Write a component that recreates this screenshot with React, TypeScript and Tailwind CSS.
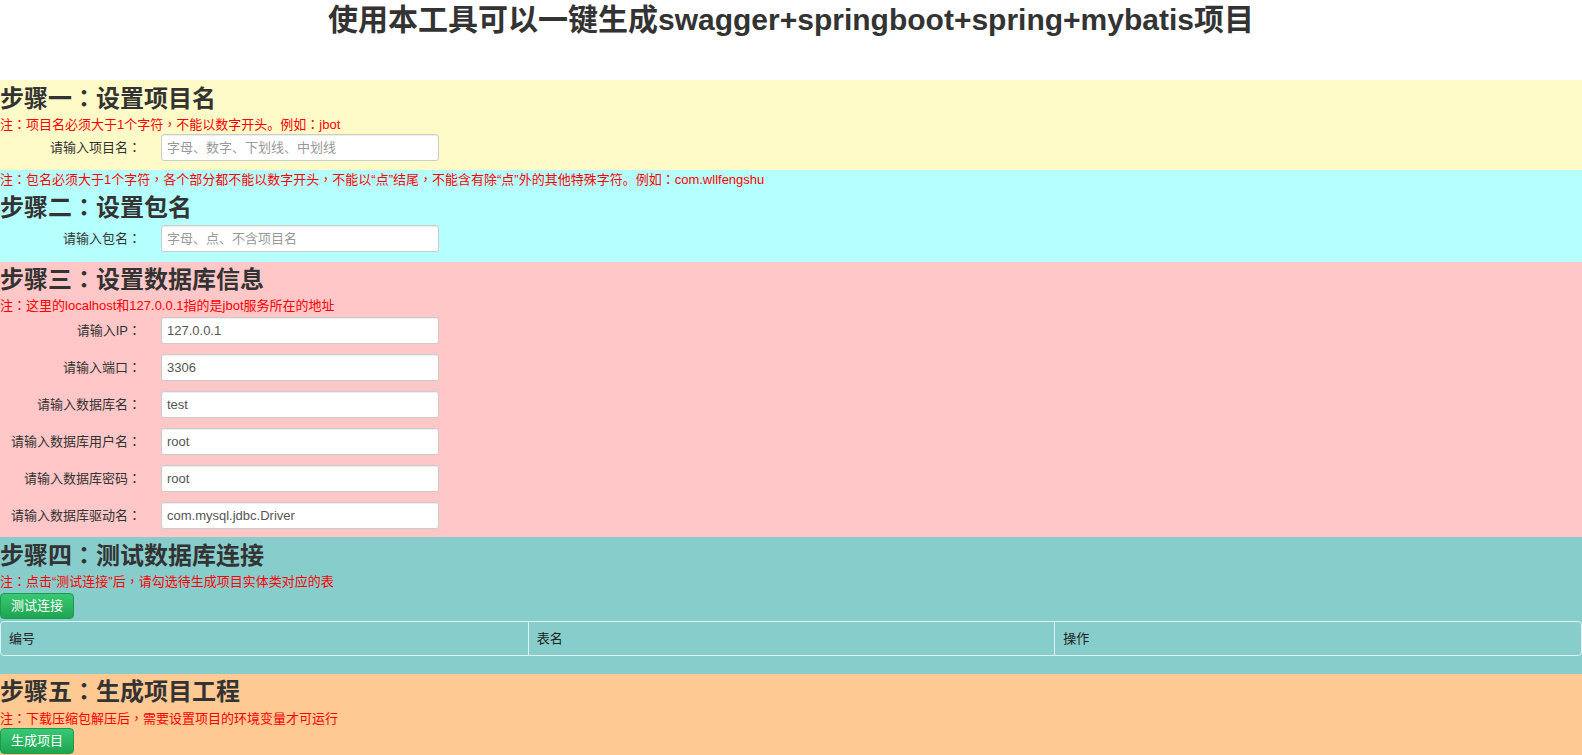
import React from "react";

const FONT = { fontFamily: '"Liberation Sans", "Noto Sans CJK SC", Arial, sans-serif' };
const TC = { fontFamily: '"Noto Sans CJK TC", "Noto Sans CJK SC", sans-serif' };

function P({ text }: { text: string }) {
  const parts = text.split(/([：，])/);
  return (
    <>
      {parts.map((p, i) =>
        p === "：" || p === "，" ? (
          <span key={i} className="leading-[0px]" style={TC}>
            {p}
          </span>
        ) : (
          <React.Fragment key={i}>{p}</React.Fragment>
        )
      )}
    </>
  );
}

function Heading({ text, className = "" }: { text: string; className?: string }) {
  return (
    <div className={`h-[26px] flex items-center ${className}`}>
      <h3 className="text-[24px] leading-[32px] font-bold text-[#333] whitespace-nowrap">
        <P text={text} />
      </h3>
    </div>
  );
}

function Note({ text, className = "" }: { text: string; className?: string }) {
  return (
    <p className={`text-[13px] leading-[18px] h-[18px] text-[#ff0000] whitespace-nowrap ${className}`}>
      <P text={text} />
    </p>
  );
}

function Field({ label, value, placeholder, className = "" }: { label: string; value?: string; placeholder?: string; className?: string }) {
  return (
    <div className={`flex items-center h-[27px] ${className}`}>
      <label className="w-[141px] text-right text-[13px] leading-[18px] text-[#333] whitespace-nowrap">
        <P text={label} />
      </label>
      <input
        className="ml-[20px] w-[278px] h-[27px] border border-[#ccc] rounded-[3px] bg-white pl-[5px] text-[13px] text-[#555] placeholder:text-[#999] shadow-[inset_0_1px_1px_rgba(0,0,0,0.075)] outline-none"
        defaultValue={value}
        placeholder={placeholder}
        style={FONT}
      />
    </div>
  );
}

function GreenButton({ children, className = "" }: { children: React.ReactNode; className?: string }) {
  return (
    <button
      className={`w-[74px] h-[26px] rounded-[4px] border border-[#1b9c4c] bg-gradient-to-b from-[#38c873] to-[#1fa552] text-white text-[13px] leading-[24px] text-center ${className}`}
      style={FONT}
    >
      {children}
    </button>
  );
}

export default function App() {
  return (
    <div className="w-[1582px] min-h-[755px] bg-white" style={FONT}>
      <h1 className="text-center text-[30px] leading-[40px] font-bold text-[#333] mb-[40px]">
        使用本工具可以一键生成swagger+springboot+spring+mybatis项目
      </h1>

      <section className="bg-[#fffbc8] pt-[6px] h-[90px]">
        <Heading text="步骤一：设置项目名" />
        <Note className="mt-[4px]" text="注：项目名必须大于1个字符，不能以数字开头。例如：jbot" />
        <Field className="mt-[0px]" label="请输入项目名：" placeholder="字母、数字、下划线、中划线" />
      </section>

      <section className="bg-[#b5ffff] pt-[1px] h-[92px]">
        <Note text="注：包名必须大于1个字符，各个部分都不能以数字开头，不能以“点”结尾，不能含有除“点”外的其他特殊字符。例如：com.wllfengshu" />
        <Heading className="mt-[6px]" text="步骤二：设置包名" />
        <Field className="mt-[4px]" label="请输入包名：" placeholder="字母、点、不含项目名" />
      </section>

      <section className="bg-[#ffc7c7] pt-[5px] h-[275px]">
        <Heading text="步骤三：设置数据库信息" />
        <Note className="mt-[4px]" text="注：这里的localhost和127.0.0.1指的是jbot服务所在的地址" />
        <div className="mt-[2px] flex flex-col gap-[10px]">
          <Field label="请输入IP：" value="127.0.0.1" />
          <Field label="请输入端口：" value="3306" />
          <Field label="请输入数据库名：" value="test" />
          <Field label="请输入数据库用户名：" value="root" />
          <Field label="请输入数据库密码：" value="root" />
          <Field label="请输入数据库驱动名：" value="com.mysql.jdbc.Driver" />
        </div>
      </section>

      <section className="bg-[#87cdcc] pt-[6px] h-[137px]">
        <Heading text="步骤四：测试数据库连接" />
        <Note className="mt-[4px]" text="注：点击“测试连接”后，请勾选待生成项目实体类对应的表" />
        <GreenButton className="mt-[2px] block">测试连接</GreenButton>
        <div className="mt-[2px] grid grid-cols-3 border border-[#dcf1f1] rounded-[4px] h-[35px]">
          <div className="px-[8px] flex items-center text-[13px] text-[#222]">编号</div>
          <div className="px-[8px] flex items-center text-[13px] text-[#222] border-l border-[#dcf1f1]">表名</div>
          <div className="px-[8px] flex items-center text-[13px] text-[#222] border-l border-[#dcf1f1]">操作</div>
        </div>
      </section>

      <section className="bg-[#ffc994] pt-[5px] h-[81px]">
        <Heading text="步骤五：生成项目工程" />
        <Note className="mt-[5px]" text="注：下载压缩包解压后，需要设置项目的环境变量才可运行" />
        <GreenButton className="mt-[0px] block">生成项目</GreenButton>
      </section>
    </div>
  );
}
